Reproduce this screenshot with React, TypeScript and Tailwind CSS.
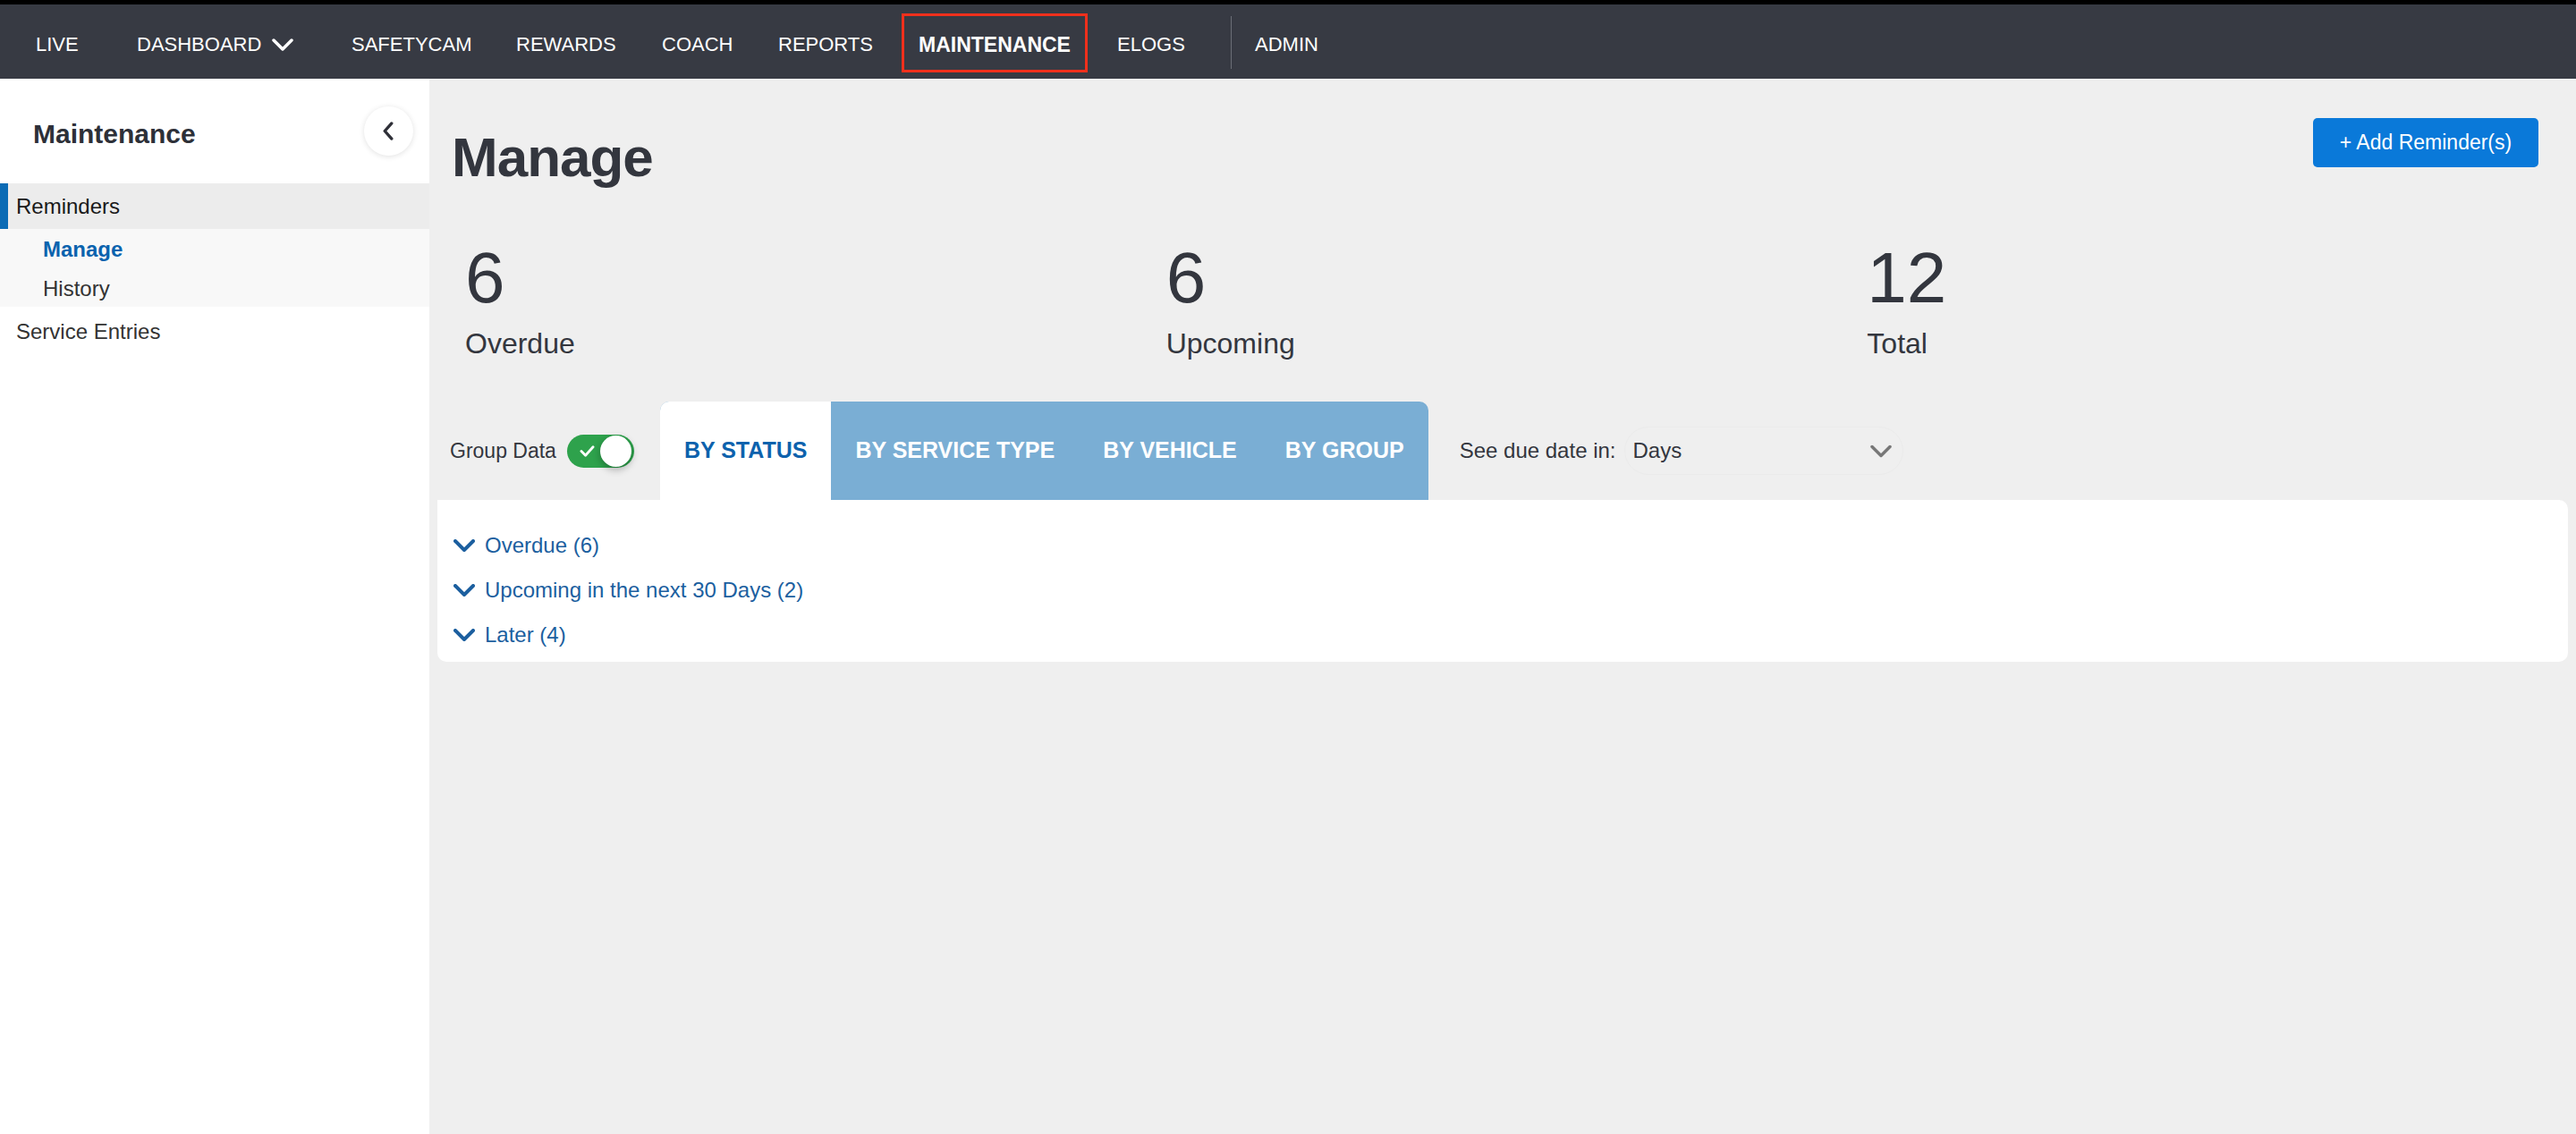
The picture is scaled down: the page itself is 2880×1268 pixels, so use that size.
import React from "react";

function ChevronDown({ className, color, sw }: { className: string; color: string; sw: number }) {
  return (
    <svg className={className} viewBox="0 0 24 14" fill="none">
      <path d="M2 2 L12 12 L22 2" stroke={color} strokeWidth={sw} strokeLinecap="round" strokeLinejoin="round" />
    </svg>
  );
}

export default function App() {
  return (
    <div className="flex flex-col h-screen w-full font-['Liberation_Sans',Arial,sans-serif] text-[#33363e]">
      {/* Top nav */}
      <nav className="h-[88px] shrink-0 bg-[#373a43] border-t-[5px] border-black flex items-center pl-[40px] text-white text-[22px]">
        <div className="w-[113px] mt-[6px]">LIVE</div>
        <div className="w-[240px] mt-[6px] flex items-center">
          <span>DASHBOARD</span>
          <ChevronDown className="ml-[12px] w-[24px] h-[14px]" color="#ffffff" sw={3.5} />
        </div>
        <div className="w-[184px] mt-[6px]">SAFETYCAM</div>
        <div className="w-[163px] mt-[6px]">REWARDS</div>
        <div className="w-[130px] mt-[6px]">COACH</div>
        <div className="w-[155px] mt-[6px]">REPORTS</div>
        <div className="w-[224px] mt-[2px] flex">
          <span className="-ml-[17px] h-[66px] w-[208px] pt-[5px] flex items-center justify-center border-[3px] border-[#f0301c] font-bold text-[23px]">
            MAINTENANCE
          </span>
        </div>
        <div className="w-[127px] mt-[6px]">ELOGS</div>
        <div className="w-[1px] h-[59px] mt-[2px] bg-[#6b6e76]" />
        <div className="ml-[26px] mt-[6px]">ADMIN</div>
      </nav>

      <div className="flex flex-1 min-h-0">
        {/* Sidebar */}
        <aside className="w-[480px] shrink-0 bg-white flex flex-col">
          <div className="h-[117px] flex items-center justify-between pl-[37px] pr-[18px]">
            <h2 className="mt-[6px] text-[30px] font-bold text-[#2d3038]">Maintenance</h2>
            <button className="w-[55px] h-[55px] rounded-full bg-white shadow-[0_1px_6px_rgba(0,0,0,0.12)] flex items-center justify-center">
              <svg viewBox="0 0 14 22" className="w-[14px] h-[21px] -ml-[2px]" fill="none">
                <path d="M11 2 L3 11 L11 20" stroke="#2f3038" strokeWidth={3.5} strokeLinecap="round" strokeLinejoin="round" />
              </svg>
            </button>
          </div>
          <div className="h-[51px] bg-[#ececec] border-l-[9px] border-[#0b6bb5] pl-[9px] flex items-center text-[24px] text-[#1a1a1a]">
            Reminders
          </div>
          <div className="bg-[#f8f8f8] pt-[1px]">
            <div className="h-[43px] pl-[48px] flex items-center text-[24px] font-bold text-[#0a63ae]">Manage</div>
            <div className="h-[43px] pl-[48px] pt-[2px] flex items-center text-[24px] text-[#333333]">History</div>
          </div>
          <div className="h-[52px] pl-[18px] pt-[3px] flex items-center text-[24px] text-[#333333]">Service Entries</div>
        </aside>

        {/* Main */}
        <main className="flex-1 bg-[#efefef] px-[9px] flex flex-col">
          <div className="flex justify-between items-start pt-[44px] pl-[16px] pr-[33px]">
            <h1 className="mt-[13px] text-[62px] leading-none font-bold tracking-[-1px] text-[#33363e]">Manage</h1>
            <button className="w-[252px] h-[55px] rounded-[5px] bg-[#0a79d9] text-white text-[23px] flex items-center justify-center">
              + Add Reminder(s)
            </button>
          </div>

          <div className="grid grid-cols-3 mt-[64px] pl-[16px] pr-[15px]">
            {[
              ["6", "Overdue"],
              ["6", "Upcoming"],
              ["12", "Total"],
            ].map(([n, l]) => (
              <div key={l} className="pl-[15px] flex flex-col">
                <div className="text-[80px] leading-none text-[#33363e]">{n}</div>
                <div className="mt-[17px] text-[32px] leading-none text-[#33363e]">{l}</div>
              </div>
            ))}
          </div>

          <div className="mt-[49px] h-[110px] flex items-center pl-[14px]">
            <span className="text-[23px] text-[#33363e]">Group Data</span>
            <div className="ml-[12px] w-[75px] h-[37px] rounded-full bg-[#2ea24c] relative flex items-center">
              <svg viewBox="0 0 20 16" className="absolute left-[13px] top-[11px] w-[19px] h-[15px]" fill="none">
                <path d="M3 8 L8 13 L17 3" stroke="#ffffff" strokeWidth={3} strokeLinecap="round" strokeLinejoin="round" />
              </svg>
              <div className="absolute right-[3px] top-[1px] w-[35px] h-[35px] rounded-full bg-white shadow-[0_3px_8px_rgba(0,0,0,0.3)]" />
            </div>
            <div className="ml-[29px] h-[110px] flex rounded-t-[10px] overflow-hidden bg-[#7aaed4] text-[25px] font-bold">
              <div className="h-full px-[27px] flex items-center bg-white text-[#0d62ad]">BY STATUS</div>
              <div className="h-full px-[27px] flex items-center text-white">BY SERVICE TYPE</div>
              <div className="h-full px-[27px] flex items-center text-white">BY VEHICLE</div>
              <div className="h-full px-[27px] flex items-center text-white">BY GROUP</div>
            </div>
            <span className="ml-[35px] text-[24px] text-[#33363e]">See due date in:</span>
            <div className="ml-[9px] w-[312px] h-[54px] rounded-[27px] border border-[#ebebeb] flex items-center justify-between pl-[9px] pr-[12px]">
              <span className="text-[24px] text-[#33363e]">Days</span>
              <ChevronDown className="w-[24px] h-[15px]" color="#777777" sw={3.5} />
            </div>
          </div>

          <div className="bg-white rounded-[10px] rounded-tl-none pt-[26px] pb-[5px] pl-[18px]">
            {["Overdue (6)", "Upcoming in the next 30 Days (2)", "Later (4)"].map((t) => (
              <div key={t} className="h-[50px] flex items-center text-[24px] text-[#1c5f9f]">
                <ChevronDown className="w-[24px] h-[14px]" color="#1c5f9f" sw={4} />
                <span className="ml-[11px]">{t}</span>
              </div>
            ))}
          </div>
        </main>
      </div>
    </div>
  );
}
